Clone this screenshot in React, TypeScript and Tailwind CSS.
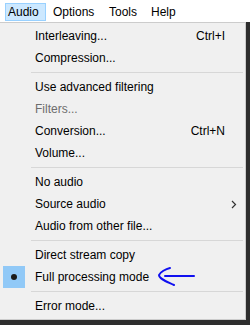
import React from "react";

type Item =
  | { kind: "sep" }
  | {
      kind: "item";
      label: string;
      shortcut?: string;
      disabled?: boolean;
      submenu?: boolean;
      checked?: boolean;
      note?: boolean;
    };

const items: Item[] = [
  { kind: "item", label: "Interleaving...", shortcut: "Ctrl+I" },
  { kind: "item", label: "Compression..." },
  { kind: "sep" },
  { kind: "item", label: "Use advanced filtering" },
  { kind: "item", label: "Filters...", disabled: true },
  { kind: "item", label: "Conversion...", shortcut: "Ctrl+N" },
  { kind: "item", label: "Volume..." },
  { kind: "sep" },
  { kind: "item", label: "No audio" },
  { kind: "item", label: "Source audio", submenu: true },
  { kind: "item", label: "Audio from other file..." },
  { kind: "sep" },
  { kind: "item", label: "Direct stream copy" },
  { kind: "item", label: "Full processing mode", checked: true, note: true },
  { kind: "sep" },
  { kind: "item", label: "Error mode..." },
];

function BlueArrow() {
  // hand drawn arrow pointing at the checked item
  return (
    <svg
      className="absolute left-[156px] top-[0px]"
      width="42"
      height="22"
      viewBox="0 0 42 22"
    >
      <path
        d="M14 2 C10 3 4 6 3 9 C3 13 12 16 18 19"
        fill="none"
        stroke="#1010f0"
        strokeWidth="2"
        strokeLinecap="round"
      />
      <path
        d="M9 10 L38 10"
        fill="none"
        stroke="#1010f0"
        strokeWidth="2"
        strokeLinecap="round"
      />
    </svg>
  );
}

function MenuRow({ item }: { item: Extract<Item, { kind: "item" }> }) {
  return (
    <div className="relative flex h-[22px] items-center">
      <div className="flex h-[22px] w-[35px] shrink-0 items-center">
        {item.checked && (
          <div className="ml-[3px] flex h-[22px] w-[22px] items-center justify-center bg-[#91c9f7]">
            <div className="h-[6px] w-[6px] rounded-full bg-[#1a1a1a]" />
          </div>
        )}
      </div>
      <span
        className={
          item.disabled
            ? "flex-1 text-[#6d6d6d]"
            : "flex-1 text-black"
        }
      >
        {item.label}
      </span>
      {item.shortcut && <span className="text-black">{item.shortcut}</span>}
      <div className="flex w-[20px] shrink-0 items-center">
        {item.submenu && (
          <svg width="6" height="9" viewBox="0 0 6 9" className="ml-[6px]">
            <path d="M1 1 L4.5 4.5 L1 8" fill="none" stroke="#333" strokeWidth="1.2" />
          </svg>
        )}
      </div>
      {item.note && <BlueArrow />}
    </div>
  );
}

export default function App() {
  return (
    <div
      className="flex h-[325px] w-[250px] flex-col overflow-hidden bg-[#5c5c5c] text-[12px]"
      style={{ fontFamily: '"Liberation Sans", Arial, sans-serif' }}
    >
      <div className="flex h-[22px] shrink-0 items-stretch bg-white pt-[3px] pb-[1px]">
        <div className="ml-[5px] flex w-[41px] items-center border border-[#99d1ff] bg-[#cce8ff] pl-[2px] text-black">
          Audio
        </div>
        <div className="flex w-[56px] items-center pl-[7px] text-black">Options</div>
        <div className="flex w-[42px] items-center pl-[7px] text-black">Tools</div>
        <div className="flex items-center pl-[7px] text-black">Help</div>
        <div className="flex-1" />
      </div>
      <div className="flex flex-1 bg-[#2e2e2e]">
        <div className="flex w-[246px] flex-col self-start border-t border-r border-b border-[#cccccc] bg-[#f0f0f0] py-[2px]">
          {items.map((it, i) =>
            it.kind === "sep" ? (
              <div key={i} className="flex h-[7px] items-center">
                <div className="ml-[31px] mr-[2px] h-px flex-1 bg-[#d7d7d7]" />
              </div>
            ) : (
              <MenuRow key={i} item={it} />
            )
          )}
        </div>
      </div>
    </div>
  );
}
